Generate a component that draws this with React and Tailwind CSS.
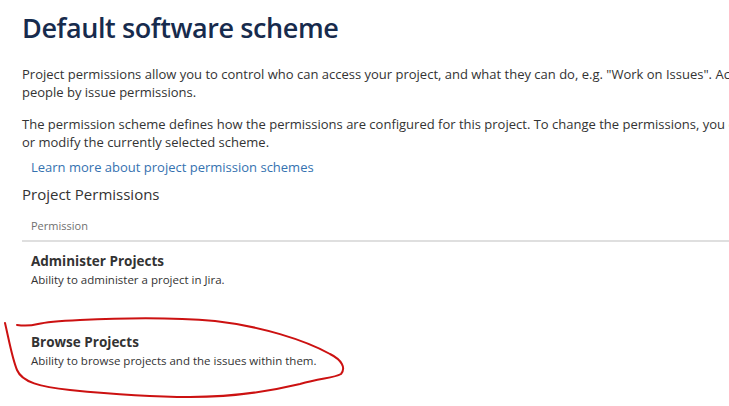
import React from "react";

const font = { fontFamily: '"Open Sans", "Noto Sans", Arial, sans-serif' };

const PermissionRow = ({ title, description }) => {
  return (
    <div className="h-[81px] pl-[9px] pt-[10px]">
      <div className="text-[13.5px] leading-[18px] font-bold text-[#333]">{title}</div>
      <div className="mt-[2px] text-[11.5px] leading-[16px] text-[#333]">{description}</div>
    </div>
  );
};

const Scribble = () => (
  <svg
    className="absolute left-0 top-0 pointer-events-none"
    width="729"
    height="406"
    viewBox="0 0 729 406"
    fill="none"
  >
    <path
      d="M5 323 C 9 340, 12 358, 17 370 C 22 382, 40 387, 70 390 C 110 394, 150 397, 190 397 C 240 397, 275 390, 300 384 C 322 378, 334 378, 341 374 C 346 368, 342 360, 330 354 C 305 340, 260 326, 215 321 C 170 317, 120 318, 80 320 C 60 321, 46 322, 38 324 C 30 326, 24 326, 17 325"
      stroke="#cc1111"
      strokeWidth="2"
      strokeLinecap="round"
      strokeLinejoin="round"
    />
  </svg>
);

export default function App() {
  return (
    <div className="relative w-[729px] h-[406px] overflow-hidden bg-white" style={font}>
      <div className="pl-[22px] w-[1100px]">
        <h1 className="mt-[10px] text-[27px] leading-[35px] tracking-[-0.4px] font-semibold text-[#172b4d]">
          Default software scheme
        </h1>

        <p className="mt-[20px] text-[13px] leading-[18px] text-[#333] whitespace-nowrap">
          Project permissions allow you to control who can access your project, and what they can do, e.g. "Work on
          Issues". Access to individual issues is then granted to
          <br />
          people by issue permissions.
        </p>

        <p className="mt-[14px] text-[13px] leading-[18px] text-[#333] whitespace-nowrap">
          The permission scheme defines how the permissions are configured for this project. To change the
          permissions, you can change the permission scheme for this project
          <br />
          or modify the currently selected scheme.
        </p>

        <a className="block mt-[7px] ml-[9px] text-[13px] leading-[18px] text-[#3572b0]" href="#">
          Learn more about project permission schemes
        </a>

        <h2 className="mt-[8px] text-[15px] leading-[20px] font-medium text-[#333]">Project Permissions</h2>

        <div>
          <div className="h-[38px] pt-[14px] pl-[9px] border-b-2 border-[#dfdfdf] text-[11px] leading-[16px] text-[#707070]">
            Permission
          </div>
          <PermissionRow title="Administer Projects" description="Ability to administer a project in Jira." />
          <PermissionRow
            title="Browse Projects"
            description="Ability to browse projects and the issues within them."
          />
        </div>
      </div>
      <Scribble />
    </div>
  );
}
